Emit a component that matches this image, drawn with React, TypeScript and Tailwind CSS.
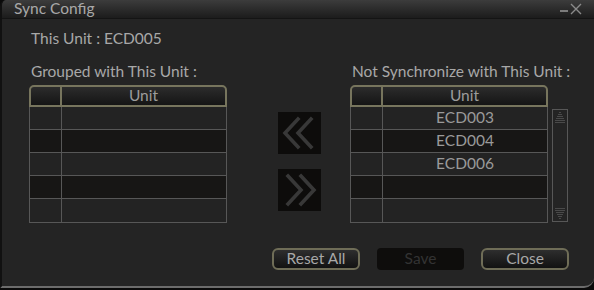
import React from "react"

const font = { fontFamily: "Lato, 'Open Sans', sans-serif" }

const Chevrons = ({ dir }: { dir: "left" | "right" }) => (
  <svg width="43" height="42" viewBox="0 0 43 42">
    {dir === "left" ? (
      <g fill="none" stroke="#383838" strokeWidth="3.6" strokeLinecap="square">
        <polyline points="20,7 7,21 20,35" />
        <polyline points="33,7 20,21 33,35" />
      </g>
    ) : (
      <g fill="none" stroke="#383838" strokeWidth="3.6" strokeLinecap="square">
        <polyline points="10,7 23,21 10,35" />
        <polyline points="23,7 36,21 23,35" />
      </g>
    )}
  </svg>
)

const UnitTable = ({ units }: { units: string[] }) => {
  const rows = [0, 1, 2, 3, 4]
  return (
    <div className="w-[198px]">
      <div className="flex h-[22px] rounded-t-[5px] border-2 border-[#77755d] bg-gradient-to-b from-[#2c2c2c] to-[#151515]">
        <div className="w-[31px] border-r-2 border-[#77755d]" />
        <div className="flex-1 flex items-center justify-center text-[15.5px] text-[#9c9c9c] leading-none">Unit</div>
      </div>
      <div className="border-x border-b border-[#575757]">
        {rows.map((i) => (
          <div
            key={i}
            className={`flex h-[23px] border-b border-[#575757] last:border-b-0 ${i % 2 === 1 ? "bg-[#171615]" : "bg-[#232323]"}`}
          >
            <div className="w-[32px] border-r border-[#575757]" />
            <div className="flex-1 flex items-center justify-center text-[15.5px] text-[#9a9a9a] leading-none">
              {units[i] ?? ""}
            </div>
          </div>
        ))}
      </div>
    </div>
  )
}

const Scrollbar = () => (
  <div className="w-[16px] h-[113px] border border-[#575757] flex flex-col justify-between items-center py-[1px]">
    <svg width="12" height="12" viewBox="0 0 12 12">
      <g stroke="#4a4a4a" strokeWidth="1">
        <line x1="5" y1="1.5" x2="7" y2="1.5" />
        <line x1="4" y1="3.5" x2="8" y2="3.5" />
        <line x1="3" y1="5.5" x2="9" y2="5.5" />
        <line x1="2" y1="7.5" x2="10" y2="7.5" />
        <line x1="1" y1="9.5" x2="11" y2="9.5" />
        <line x1="1" y1="11.5" x2="11" y2="11.5" />
      </g>
    </svg>
    <svg width="12" height="12" viewBox="0 0 12 12">
      <g stroke="#4a4a4a" strokeWidth="1">
        <line x1="1" y1="0.5" x2="11" y2="0.5" />
        <line x1="1" y1="2.5" x2="11" y2="2.5" />
        <line x1="2" y1="4.5" x2="10" y2="4.5" />
        <line x1="3" y1="6.5" x2="9" y2="6.5" />
        <line x1="4" y1="8.5" x2="8" y2="8.5" />
        <line x1="5" y1="10.5" x2="7" y2="10.5" />
      </g>
    </svg>
  </div>
)

export default function App() {
  return (
    <div style={font} className="w-[594px] h-[290px] bg-[#0a0a0a]">
      <div className="w-[594px] h-[288px] flex flex-col bg-[#242424] rounded-tl-[6px] rounded-br-[10px] border-l-2 border-l-[#111] border-b-2 border-b-[#6c6c6c] overflow-hidden">
        {/* title bar */}
        <div className="h-[19px] flex items-center justify-between pl-[12px] pr-[12px] bg-gradient-to-b from-[#3c3c3c] to-[#1c1c1c] border-b border-[#141414]">
          <span className="text-[15.5px] text-[#a8a8a8] leading-none">Sync Config</span>
          <div className="flex items-end gap-[2px] text-[#7c7c7c]">
            <span className="block w-[8px] h-[2px] bg-[#7c7c7c] mb-[3px]" />
            <svg width="12" height="12" viewBox="0 0 12 12">
              <path d="M1 1 L11 11 M11 1 L1 11" stroke="#8a8a8a" strokeWidth="1.4" />
            </svg>
          </div>
        </div>

        {/* body */}
        <div className="flex-1 flex flex-col pl-[27px] pr-[25px]">
          <div className="pl-[2px] pt-[10px] text-[15.5px] text-[#a8a8a8] leading-[18px]">This Unit : ECD005</div>

          <div className="flex mt-[15px]">
            <div className="flex flex-col">
              <div className="pl-[2px] text-[15.5px] text-[#a8a8a8] leading-[18px]">Grouped with This Unit :</div>
              <div className="mt-[5px]">
                <UnitTable units={[]} />
              </div>
            </div>

            <div className="flex flex-col ml-[51px] pt-[50px] gap-[15px]">
              <div className="w-[43px] h-[42px] bg-[#0d0c0b]">
                <Chevrons dir="left" />
              </div>
              <div className="w-[43px] h-[42px] bg-[#0d0c0b]">
                <Chevrons dir="right" />
              </div>
            </div>

            <div className="flex flex-col ml-[29px]">
              <div className="pl-[2px] text-[15.5px] text-[#a8a8a8] leading-[18px] whitespace-nowrap">Not Synchronize with This Unit :</div>
              <div className="mt-[5px] flex items-start gap-[4px]">
                <UnitTable units={["ECD003", "ECD004", "ECD006"]} />
                <div className="mt-[24px]">
                  <Scrollbar />
                </div>
              </div>
            </div>
          </div>

          <div className="flex justify-end gap-[17px] mt-[25px]">
            <button className="w-[88px] h-[22px] rounded-[6px] border-2 border-[#6f6d57] bg-gradient-to-b from-[#2e2e2e] to-[#121212] text-[15.5px] text-[#a8a8a8] leading-none">Reset All</button>
            <button className="w-[87px] h-[22px] rounded-[4px] bg-[#0e0d0c] text-[15.5px] text-[#333] leading-none">Save</button>
            <button className="w-[88px] h-[22px] rounded-[6px] border-2 border-[#6f6d57] bg-gradient-to-b from-[#2e2e2e] to-[#121212] text-[15.5px] text-[#a8a8a8] leading-none">Close</button>
          </div>
        </div>
      </div>
    </div>
  )
}
